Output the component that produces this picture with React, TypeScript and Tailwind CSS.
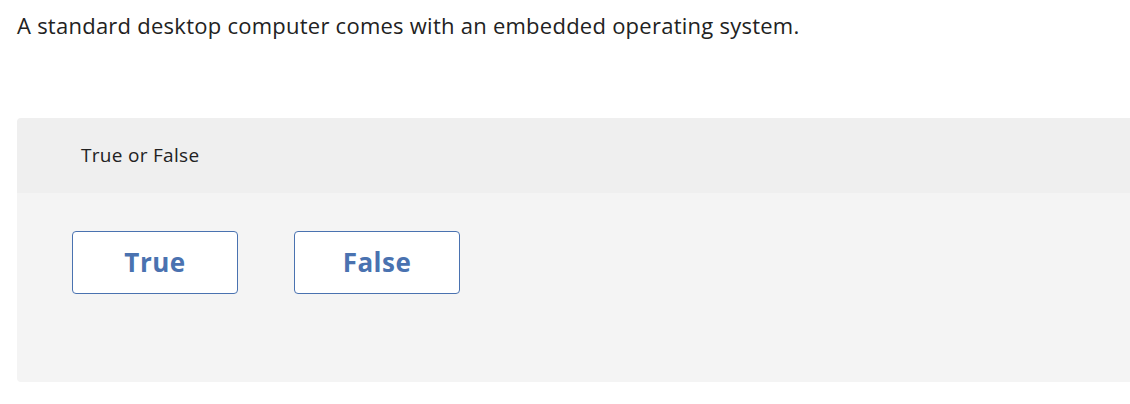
export default function App() {
  return (
    <main className="w-[1130px] h-[404px] overflow-hidden bg-white text-[#222] font-['Open_Sans',sans-serif]">
      <p className="pl-[17px] pt-[10px] text-[22px] leading-[30px] tracking-[0.25px]">
        A standard desktop computer comes with an embedded operating system.
      </p>
      <section className="ml-[17px] mt-[78px] w-[1130px] rounded-[4px] overflow-hidden">
        <div className="h-[75px] bg-[#efefef] flex items-center pl-[64px] text-[19px] tracking-[0.3px] text-[#222]">
          True or False
        </div>
        <div className="h-[189px] bg-[#f4f4f4] pt-[38px] pl-[55px] flex items-start gap-[56px]">
          {['True', 'False'].map((t) => (
            <button
              key={t}
              className="w-[166px] h-[63px] bg-white border border-[#4a72b0] rounded-[4px] text-[#4a72b0] text-[26px] tracking-[0.5px] font-bold"
            >
              {t}
            </button>
          ))}
        </div>
      </section>
    </main>
  )
}
